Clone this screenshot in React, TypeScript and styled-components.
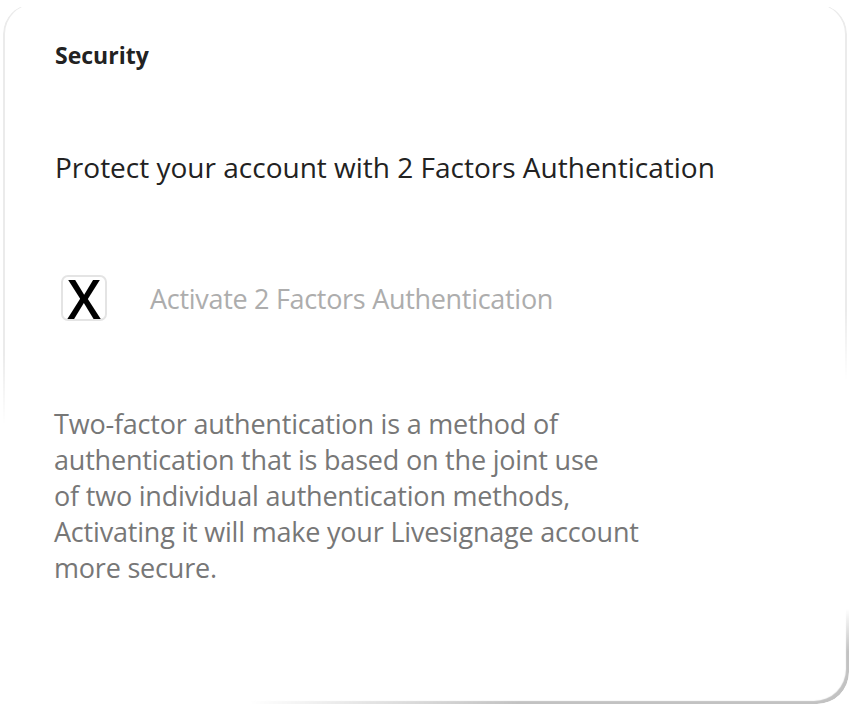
import React from 'react'
import styled, { createGlobalStyle } from 'styled-components'

const GlobalStyle = createGlobalStyle`
  html, body {
    margin: 0;
    padding: 0;
    background: #fff;
  }
  body {
    font-family: 'Open Sans', 'Noto Sans', sans-serif;
  }
`

const Page = styled.div`
  width: 851px;
  height: 710px;
  padding: 4px 4px 0 3px;
  box-sizing: border-box;
`

const Card = styled.section`
  position: relative;
  height: 697px;
  padding: 37px 0 0 52px;
  box-sizing: border-box;

  /* faint edge along the top half */
  &::before {
    content: '';
    position: absolute;
    top: 0;
    left: 0;
    right: 0;
    height: 430px;
    border-radius: 30px 30px 0 0;
    box-shadow: inset 2px 0 0 #ebebeb, inset -2px 0 0 #ebebeb;
    clip-path: inset(3px 0 0 0);
    pointer-events: none;
    -webkit-mask-image: linear-gradient(177deg, #000 0, #000 350px, transparent 420px);
    mask-image: linear-gradient(177deg, #000 0, #000 350px, transparent 420px);
  }

  /* soft shadow around the bottom right corner */
  &::after {
    content: '';
    position: absolute;
    left: 0;
    right: -2px;
    bottom: -3px;
    height: 110px;
    border-radius: 0 0 32px 0;
    box-shadow: inset -3px -3px 1px #c2c2c2;
    pointer-events: none;
    -webkit-mask-image: radial-gradient(600px 95px at 100% 100%, #000 55%, transparent 100%);
    mask-image: radial-gradient(600px 95px at 100% 100%, #000 55%, transparent 100%);
  }
`

const SectionTitle = styled.h2`
  margin: 0;
  font-size: 23px;
  font-weight: 700;
  line-height: 28px;
  color: #222;
`

const Lead = styled.p`
  margin: 80px 0 0;
  font-size: 28px;
  line-height: 36px;
  color: #222;
`

const OptionRow = styled.label`
  display: flex;
  align-items: center;
  gap: 43px;
  margin: 90px 0 0 6px;
`

const Box = styled.span`
  width: 46px;
  height: 46px;
  box-sizing: border-box;
  border: 2px solid #e4e4e4;
  border-radius: 7px;
  display: flex;
  align-items: center;
  justify-content: center;
  font-size: 54px;
  font-weight: 600;
  line-height: 1;
  color: #000;
`

const OptionText = styled.span`
  font-size: 27px;
  color: #adadad;
  letter-spacing: -0.3px;
`

const Description = styled.p`
  margin: 85px 0 0 -1px;
  font-size: 27px;
  line-height: 36px;
  color: #777;
  letter-spacing: -0.2px;
`

export default function App() {
  return (
    <>
      <GlobalStyle />
      <Page>
        <Card>
          <SectionTitle>Security</SectionTitle>
          <Lead>Protect your account with 2 Factors Authentication</Lead>
          <OptionRow>
            <Box>X</Box>
            <OptionText>Activate 2 Factors Authentication</OptionText>
          </OptionRow>
          <Description>
            Two-factor authentication is a method of
            <br />
            authentication that is based on the joint use
            <br />
            of two individual authentication methods,
            <br />
            Activating it will make your Livesignage account
            <br />
            more secure.
          </Description>
        </Card>
      </Page>
    </>
  )
}
